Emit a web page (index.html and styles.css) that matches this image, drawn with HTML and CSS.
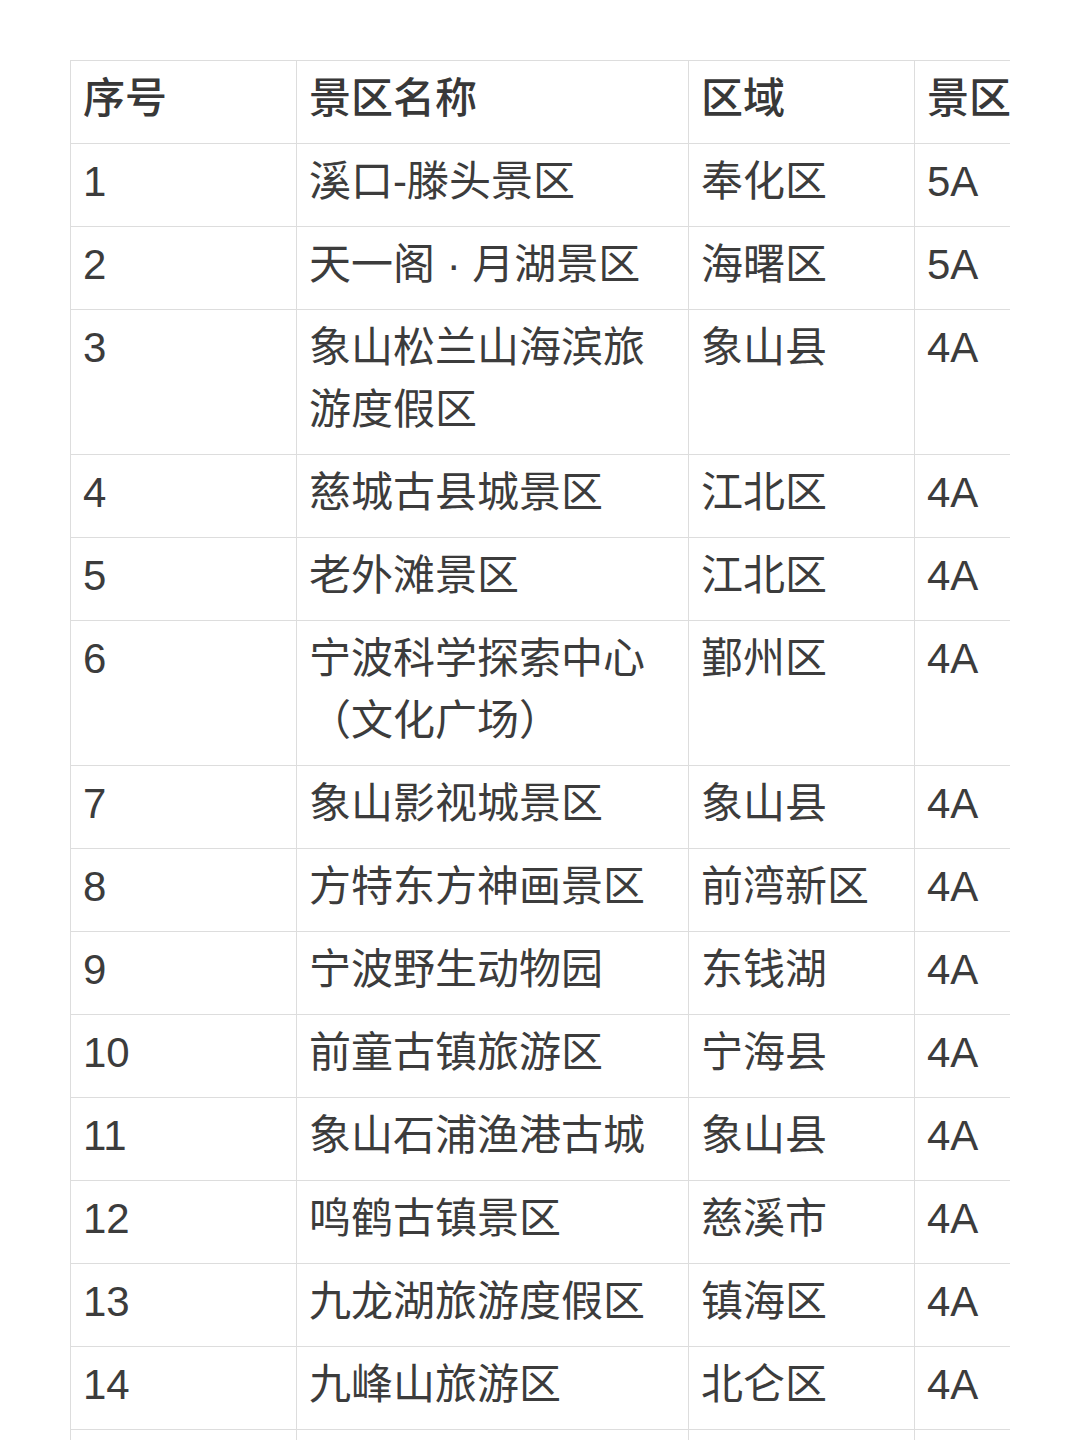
FILE: index.html
```html
<!DOCTYPE html>
<html lang="zh-CN">
<head>
<meta charset="utf-8">
<link rel="stylesheet" href="styles.css">
</head>
<body>
<div class="wrap">
  <table class="tbl">
    <colgroup>
      <col class="c1"><col class="c2"><col class="c3"><col class="c4">
    </colgroup>
    <thead>
      <tr><th>序号</th><th>景区名称</th><th>区域</th><th>景区等级</th></tr>
    </thead>
    <tbody>
      <tr><td>1</td><td>溪口-滕头景区</td><td>奉化区</td><td>5A</td></tr>
      <tr><td>2</td><td>天一阁 · 月湖景区</td><td>海曙区</td><td>5A</td></tr>
      <tr><td>3</td><td>象山松兰山海滨旅游度假区</td><td>象山县</td><td>4A</td></tr>
      <tr><td>4</td><td>慈城古县城景区</td><td>江北区</td><td>4A</td></tr>
      <tr><td>5</td><td>老外滩景区</td><td>江北区</td><td>4A</td></tr>
      <tr><td>6</td><td>宁波科学探索中心（文化广场）</td><td>鄞州区</td><td>4A</td></tr>
      <tr><td>7</td><td>象山影视城景区</td><td>象山县</td><td>4A</td></tr>
      <tr><td>8</td><td>方特东方神画景区</td><td>前湾新区</td><td>4A</td></tr>
      <tr><td>9</td><td>宁波野生动物园</td><td>东钱湖</td><td>4A</td></tr>
      <tr><td>10</td><td>前童古镇旅游区</td><td>宁海县</td><td>4A</td></tr>
      <tr><td>11</td><td>象山石浦渔港古城</td><td>象山县</td><td>4A</td></tr>
      <tr><td>12</td><td>鸣鹤古镇景区</td><td>慈溪市</td><td>4A</td></tr>
      <tr><td>13</td><td>九龙湖旅游度假区</td><td>镇海区</td><td>4A</td></tr>
      <tr><td>14</td><td>九峰山旅游区</td><td>北仑区</td><td>4A</td></tr>
      <tr><td>15</td><td>宁波植物园</td><td>镇海区</td><td>4A</td></tr>
    </tbody>
  </table>
</div>
</body>
</html>
```

FILE: styles.css
```css
html, body {
  margin: 0;
  padding: 0;
  background: #ffffff;
}
body {
  font-family: "Liberation Sans", "Noto Sans CJK SC", sans-serif;
  color: #3c3c3c;
  height: 1440px;
  overflow: hidden;
}
.wrap {
  margin: 60px 0 0 70px;
  width: 940px;
  overflow: hidden;
}
.tbl {
  border-collapse: collapse;
  table-layout: fixed;
  width: 1070px;
}
.c1 { width: 226px; }
.c2 { width: 392px; }
.c3 { width: 226px; }
.c4 { width: 226px; }
.tbl th, .tbl td {
  border: 1px solid #dddddd;
  padding: 7px 14px 13px 12px;
  font-size: 42px;
  line-height: 62px;
  text-align: left;
  vertical-align: top;
}
.tbl th {
  font-weight: 500;
  color: #383838;
}
.tbl td {
  font-weight: 400;
}
```
